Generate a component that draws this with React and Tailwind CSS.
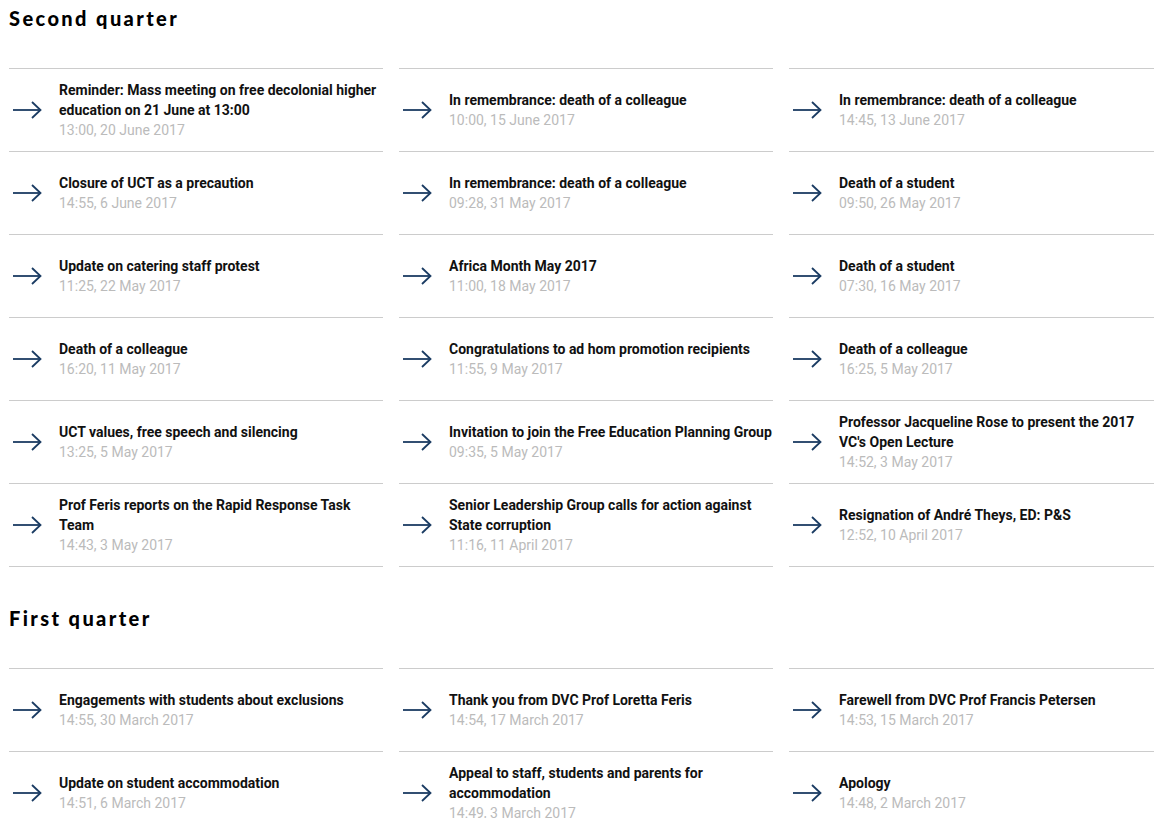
import React from 'react';

const quarters = [
  {
    title: 'Second quarter',
    items: [
      { title: 'Reminder: Mass meeting on free decolonial higher education on 21 June at 13:00', date: '13:00, 20 June 2017' },
      { title: 'In remembrance: death of a colleague', date: '10:00, 15 June 2017' },
      { title: 'In remembrance: death of a colleague', date: '14:45, 13 June 2017' },
      { title: 'Closure of UCT as a precaution', date: '14:55, 6 June 2017' },
      { title: 'In remembrance: death of a colleague', date: '09:28, 31 May 2017' },
      { title: 'Death of a student', date: '09:50, 26 May 2017' },
      { title: 'Update on catering staff protest', date: '11:25, 22 May 2017' },
      { title: 'Africa Month May 2017', date: '11:00, 18 May 2017' },
      { title: 'Death of a student', date: '07:30, 16 May 2017' },
      { title: 'Death of a colleague', date: '16:20, 11 May 2017' },
      { title: 'Congratulations to ad hom promotion recipients', date: '11:55, 9 May 2017' },
      { title: 'Death of a colleague', date: '16:25, 5 May 2017' },
      { title: 'UCT values, free speech and silencing', date: '13:25, 5 May 2017' },
      { title: 'Invitation to join the Free Education Planning Group', date: '09:35, 5 May 2017' },
      { title: "Professor Jacqueline Rose to present the 2017 VC's Open Lecture", date: '14:52, 3 May 2017' },
      { title: 'Prof Feris reports on the Rapid Response Task Team', date: '14:43, 3 May 2017' },
      { title: 'Senior Leadership Group calls for action against State corruption', date: '11:16, 11 April 2017' },
      { title: 'Resignation of André Theys, ED: P&S', date: '12:52, 10 April 2017' },
    ],
  },
  {
    title: 'First quarter',
    items: [
      { title: 'Engagements with students about exclusions', date: '14:55, 30 March 2017' },
      { title: 'Thank you from DVC Prof Loretta Feris', date: '14:54, 17 March 2017' },
      { title: 'Farewell from DVC Prof Francis Petersen', date: '14:53, 15 March 2017' },
      { title: 'Update on student accommodation', date: '14:51, 6 March 2017' },
      { title: 'Appeal to staff, students and parents for accommodation', date: '14:49, 3 March 2017' },
      { title: 'Apology', date: '14:48, 2 March 2017' },
    ],
  },
];

function Arrow() {
  return (
    <svg width="30" height="18" viewBox="0 0 30 18" fill="none" className="shrink-0">
      <path d="M1 9 H28" stroke="#1b3c63" strokeWidth="1.8" />
      <path d="M20 1 L28.5 9 L20 17" stroke="#1b3c63" strokeWidth="1.8" />
    </svg>
  );
}

function NewsItem({ item, last }) {
  return (
    <a
      href="#"
      className={`flex items-center h-[83px] border-t border-[#cccccc] pl-[3px] gap-[17px] ${last ? 'border-b h-[84px]' : ''}`}
    >
      <Arrow />
      <div className="flex flex-col">
        <span className="text-[14px] leading-[20px] font-bold text-[#111]">{item.title}</span>
        <span className="text-[14px] leading-[20px] text-[#bbbbbb]">{item.date}</span>
      </div>
    </a>
  );
}

export default function App() {
  return (
    <div className="h-[818px] w-[1154px] overflow-hidden bg-white" style={{ fontFamily: 'Roboto, "Liberation Sans", sans-serif' }}>
      <div className="w-[1163px] pl-[9px]">
        {quarters.map((q) => (
          <section key={q.title} className="pb-[33px]">
            <h2
              className="h-[68px] pt-[5px] text-[20px] leading-[26px] font-black tracking-[2.4px] text-black"
              style={{ fontFamily: 'Lato, sans-serif' }}
            >
              {q.title}
            </h2>
            <div className="grid grid-cols-[374px_374px_374px] gap-x-[16px]">
              {q.items.map((item, i) => (
                <NewsItem key={i} item={item} last={i >= q.items.length - 3} />
              ))}
            </div>
          </section>
        ))}
      </div>
    </div>
  );
}
